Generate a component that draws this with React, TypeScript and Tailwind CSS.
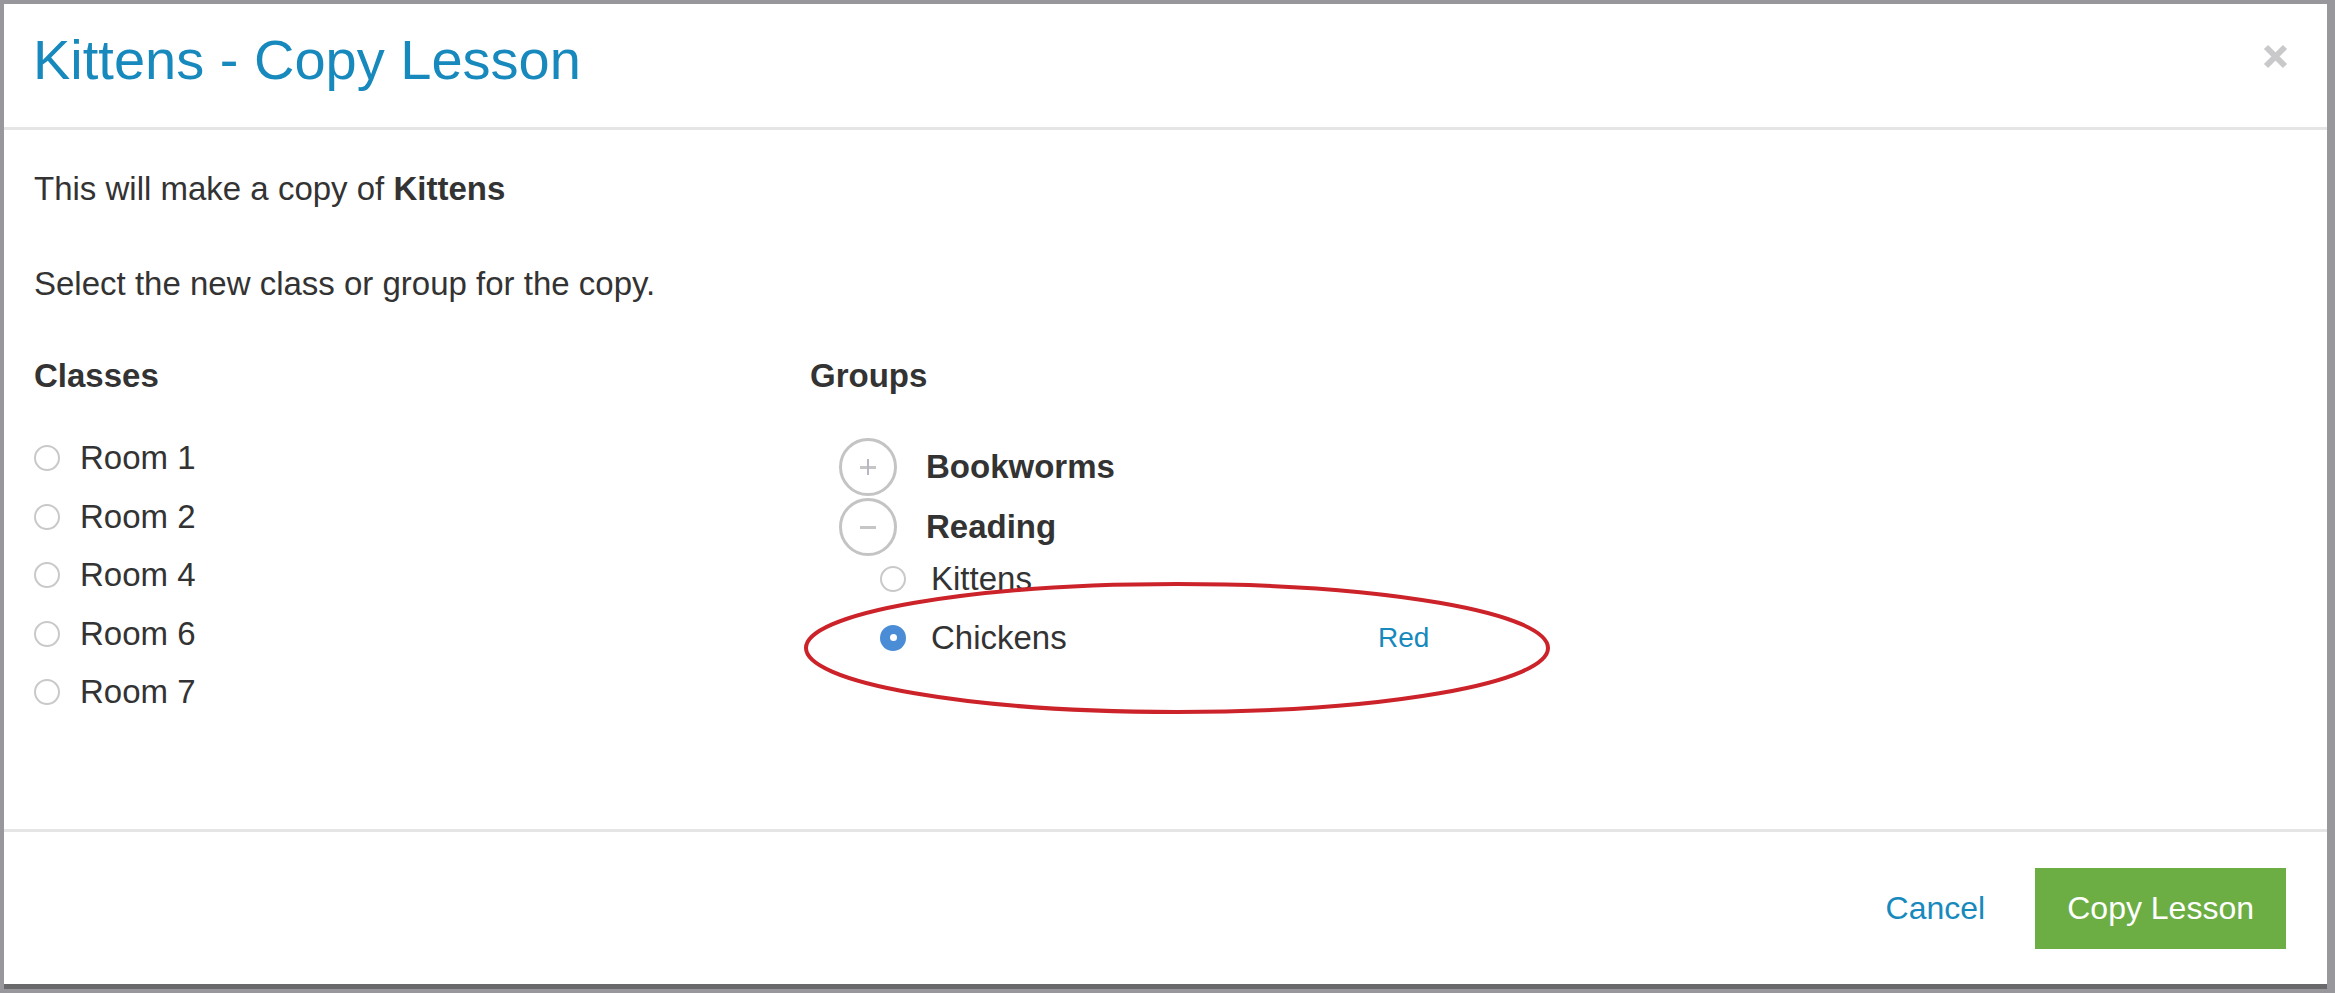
import React from "react";

const classes = ["Room 1", "Room 2", "Room 4", "Room 6", "Room 7"];

function Radio({ checked = false }: { checked?: boolean }) {
  if (checked) {
    return (
      <span className="flex h-[26px] w-[26px] shrink-0 items-center justify-center rounded-full bg-[#4a8dd6]">
        <span className="h-[7px] w-[7px] rounded-full bg-white" />
      </span>
    );
  }
  return <span className="h-[26px] w-[26px] shrink-0 rounded-full border-[2px] border-[#c9c9c9] bg-white" />;
}

function Toggle({ open }: { open: boolean }) {
  return (
    <span className="relative flex h-[58px] w-[58px] shrink-0 items-center justify-center rounded-full border-[3px] border-[#c4c4c4]">
      <span className="h-[3px] w-[16px] bg-[#c6c6c6]" />
      {!open && <span className="absolute h-[16px] w-[2px] bg-[#b8b8c4]" />}
    </span>
  );
}

export default function App() {
  return (
    <div className="h-screen bg-[#98989c] pl-[4px] pt-[4px] font-['Liberation_Sans',Arial,sans-serif]">
      <div className="relative flex h-[985px] w-[2323px] flex-col border-b-[5px] border-[#69696b] bg-white">
        {/* header */}
        <div className="flex h-[126px] shrink-0 items-start justify-between border-b-[3px] border-[#e5e5e5] pl-[29px] pr-[39px] pt-[25px]">
          <h1 className="text-[56px] leading-[62px] text-[#1789bd]">Kittens - Copy Lesson</h1>
          <svg width="25" height="25" viewBox="0 0 25 25" className="mt-[15px]">
            <path d="M3 3 L22 22 M22 3 L3 22" stroke="#c9c9cc" strokeWidth="6" />
          </svg>
        </div>

        {/* body */}
        <div className="flex-1 pl-[30px] pt-[36px] text-[33px] leading-[46px] text-[#333]">
          <p>
            This will make a copy of <span className="font-bold">Kittens</span>
          </p>
          <p className="mt-[49px]">Select the new class or group for the copy.</p>

          <div className="mt-[46px] grid grid-cols-[776px_1fr]">
            <div>
              <h3 className="font-bold">Classes</h3>
              <ul className="mt-[30px]">
                {classes.map((c) => (
                  <li key={c} className="flex h-[58.5px] items-center">
                    <Radio />
                    <span className="ml-[20px]">{c}</span>
                  </li>
                ))}
              </ul>
            </div>

            <div>
              <h3 className="font-bold">Groups</h3>
              <ul className="mt-[39px]">
                <li className="flex h-[58px] items-center pl-[29px]">
                  <Toggle open={false} />
                  <span className="ml-[29px] font-bold">Bookworms</span>
                </li>
                <li className="mt-[2px] flex h-[58px] items-center pl-[29px]">
                  <Toggle open />
                  <span className="ml-[29px] font-bold">Reading</span>
                </li>
                <li className="-mt-[7px] flex h-[59px] items-center pl-[70px]">
                  <Radio />
                  <span className="ml-[25px]">Kittens</span>
                </li>
                <li className="flex h-[59px] items-center pl-[70px]">
                  <Radio checked />
                  <span className="ml-[25px] w-[447px]">Chickens</span>
                  <span className="text-[28px] text-[#1789bd]">Red</span>
                </li>
              </ul>
            </div>
          </div>
        </div>

        {/* footer */}
        <div className="flex h-[155px] shrink-0 items-center justify-end gap-[50px] border-t-[3px] border-[#e5e5e5] pr-[41px] text-[32px]">
          <button className="text-[#1789bd]">Cancel</button>
          <button className="h-[81px] bg-[#6cae44] px-[32px] text-white">Copy Lesson</button>
        </div>

        {/* red annotation */}
        <svg
          className="pointer-events-none absolute left-[799px] top-[574px]"
          width="748"
          height="140"
          viewBox="0 0 748 140"
        >
          <ellipse cx="374" cy="70" rx="371" ry="64" fill="none" stroke="#cc2229" strokeWidth="4" />
        </svg>
      </div>
    </div>
  );
}
